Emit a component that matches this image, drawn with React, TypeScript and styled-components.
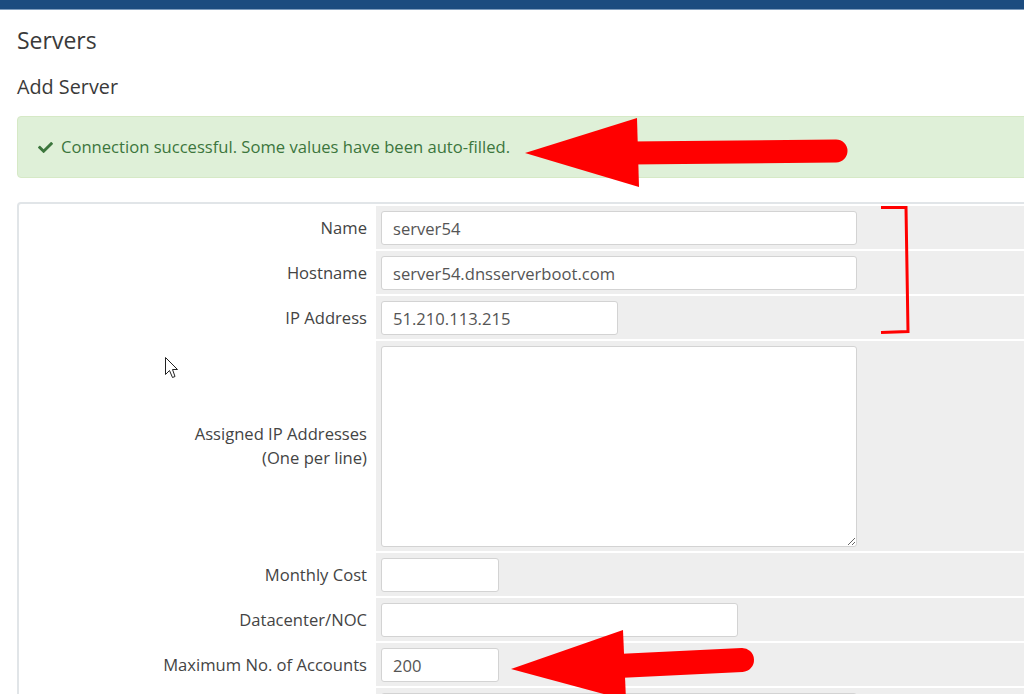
import React from 'react'
import styled, { createGlobalStyle } from 'styled-components'
import { FaCheck } from 'react-icons/fa'

const GlobalStyle = createGlobalStyle`
  html, body {
    margin: 0;
    padding: 0;
    background: #ffffff;
    overflow: hidden;
    font-family: "Open Sans", "DejaVu Sans", sans-serif;
  }
`

interface FieldRow {
  label: string
  sub?: string
  value?: string
  width: number
  multiline?: boolean
}

const rows: FieldRow[] = [
  { label: 'Name', value: 'server54', width: 476 },
  { label: 'Hostname', value: 'server54.dnsserverboot.com', width: 476 },
  { label: 'IP Address', value: '51.210.113.215', width: 237 },
  { label: 'Assigned IP Addresses', sub: '(One per line)', width: 476, multiline: true },
  { label: 'Monthly Cost', width: 118 },
  { label: 'Datacenter/NOC', width: 357 },
  { label: 'Maximum No. of Accounts', value: '200', width: 118 },
  { label: '', width: 476 },
]

const App: React.FC = () => {
  return (
    <StyledApp>
      <GlobalStyle />
      <StyledTopBar />
      <StyledPage>
        <StyledTitle>Servers</StyledTitle>
        <StyledSubTitle>Add Server</StyledSubTitle>
        <StyledAlert>
          <FaCheck size={15} />
          <span>Connection successful. Some values have been auto-filled.</span>
        </StyledAlert>
        <StyledFormBox>
          {rows.map((row, i) => (
            <React.Fragment key={i}>
              <StyledLabelCell>
                <span>{row.label}</span>
                {row.sub && <span>{row.sub}</span>}
              </StyledLabelCell>
              <StyledFieldCell>
                {row.multiline ? (
                  <StyledTextArea $width={row.width} defaultValue="" />
                ) : (
                  <StyledInput $width={row.width} defaultValue={row.value ?? ''} />
                )}
              </StyledFieldCell>
            </React.Fragment>
          ))}
        </StyledFormBox>
      </StyledPage>

      {/* red annotations + mouse pointer drawn over the screenshot */}
      <StyledOverlay width="1024" height="694" viewBox="0 0 1024 694">
        <g fill="#ff0000" stroke="none">
          <polygon points="525,153 637,118 639,187" />
          <polygon points="511,669 623,630 626,700" />
        </g>
        <g stroke="#ff0000" strokeLinecap="round" fill="none">
          <line x1="630" y1="153" x2="836" y2="151" strokeWidth="23" />
          <line x1="618" y1="666" x2="742" y2="660" strokeWidth="24" />
          <polyline
            points="881,207.5 906,207.5 908,331.5 881,332.5"
            strokeWidth="3"
            strokeLinecap="butt"
            strokeLinejoin="miter"
          />
        </g>
        <path
          d="M165.5 357.5 L165.5 374.5 L169.5 370.5 L172.5 377.5 L175 376.5 L172.5 369.5 L177.5 369.5 Z"
          fill="#ffffff"
          stroke="#222222"
          strokeWidth="1"
        />
      </StyledOverlay>
    </StyledApp>
  )
}

const StyledApp = styled.div`
  position: relative;
  width: 1024px;
  height: 694px;
  overflow: hidden;
`

const StyledTopBar = styled.div`
  height: 9px;
  background: #1c4c7f;
  border-bottom: 1px solid #7f9dbd;
`

const StyledPage = styled.div`
  width: 1120px;
  padding-left: 17px;
  box-sizing: border-box;
`

const StyledTitle = styled.h1`
  margin: 16px 0 0;
  font-size: 23px;
  line-height: 28px;
  font-weight: 400;
  color: #3a3a3a;
`

const StyledSubTitle = styled.h2`
  margin: 21px 0 0;
  font-size: 19.8px;
  line-height: 24px;
  font-weight: 400;
  color: #3a3a3a;
`

const StyledAlert = styled.div`
  margin-top: 17px;
  display: flex;
  align-items: center;
  gap: 8px;
  padding: 19px 20px;
  line-height: 22px;
  font-size: 16.6px;
  color: #3c763d;
  background: #dff0d8;
  border: 1px solid #d6e9c6;
  border-radius: 4px;

  svg {
    flex: none;
  }
`

const StyledFormBox = styled.div`
  margin-top: 24px;
  display: grid;
  grid-template-columns: 353px 1fr;
  gap: 2px;
  padding: 2px;
  border: 2px solid #e1e5e8;
  border-radius: 4px;
`

const StyledLabelCell = styled.div`
  display: flex;
  flex-direction: column;
  align-items: flex-end;
  justify-content: center;
  padding-right: 7px;
  font-size: 16.6px;
  line-height: 24px;
  color: #444444;
  text-align: right;
`

const StyledFieldCell = styled.div`
  background: #eeeeee;
  padding: 5px 5px 4px;
  display: flex;
`

const StyledInput = styled.input<{ $width: number }>`
  width: ${(p) => p.$width}px;
  height: 34px;
  box-sizing: border-box;
  border: 1px solid #d3d3d3;
  border-radius: 3px;
  padding: 0 11px;
  font-family: inherit;
  font-size: 16.6px;
  color: #555555;
  background: #ffffff;
  outline: none;
`

const StyledTextArea = styled.textarea<{ $width: number }>`
  width: ${(p) => p.$width}px;
  height: 201px;
  box-sizing: border-box;
  border: 1px solid #d3d3d3;
  border-radius: 3px;
  padding: 6px 11px;
  font-family: inherit;
  font-size: 16.6px;
  color: #555555;
  background: #ffffff;
  outline: none;
  resize: both;
`

const StyledOverlay = styled.svg`
  position: absolute;
  left: 0;
  top: 0;
  pointer-events: none;
`

export default App
